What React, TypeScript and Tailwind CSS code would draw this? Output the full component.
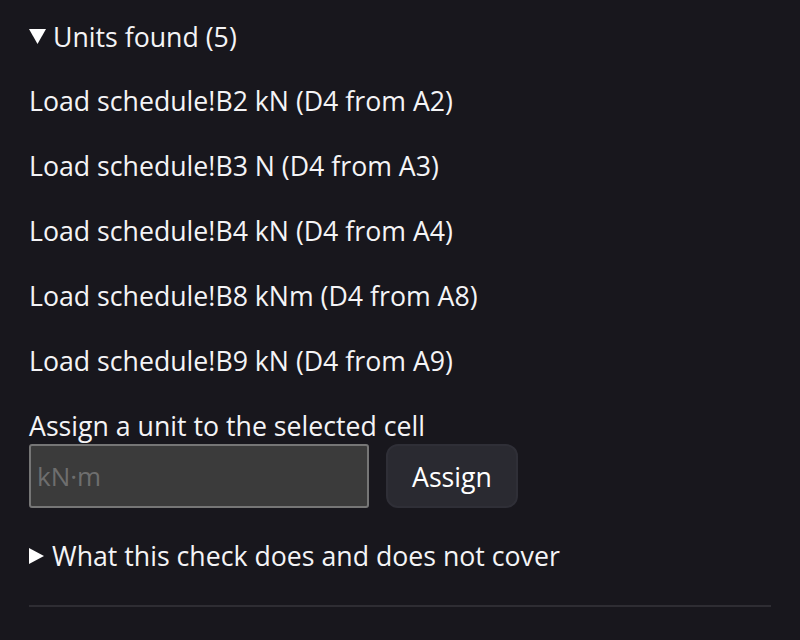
const units = [
  "Load schedule!B2 kN (D4 from A2)",
  "Load schedule!B3 N (D4 from A3)",
  "Load schedule!B4 kN (D4 from A4)",
  "Load schedule!B8 kNm (D4 from A8)",
  "Load schedule!B9 kN (D4 from A9)",
]

const Triangle = ({ open }: { open: boolean }) =>
  open ? (
    <svg width="17" height="17" viewBox="0 0 17 17" className="mr-[7px] shrink-0">
      <path d="M0 1h17L8.5 16z" fill="#ffffff" />
    </svg>
  ) : (
    <svg width="15" height="18" viewBox="0 0 15 18" className="mr-[8px] shrink-0">
      <path d="M0 1v16l15-8z" fill="#ffffff" />
    </svg>
  )

const App = () => {
  return (
    <div className="min-h-[640px] bg-[#18171d] px-[29px] pt-[17px] text-[26.7px] leading-[39px] text-[#f4f4f6] font-['Open_Sans',sans-serif]">
      <div className="flex items-center">
        <Triangle open />
        <span>Units found (5)</span>
      </div>
      <div className="mt-[25px] flex flex-col gap-[26px]">
        {units.map((u) => (
          <p key={u}>{u}</p>
        ))}
      </div>
      <div className="mt-[26px]">Assign a unit to the selected cell</div>
      <div className="-mt-[1px] flex items-center gap-[17px]">
        <input
          placeholder="kN·m"
          className="h-[64px] w-[340px] rounded-[3px] border-2 border-[#767676] bg-[#3b3b3b] px-[6px] text-[26px] text-white placeholder:text-[#6e6e6e] outline-none"
        />
        <button className="h-[64px] rounded-[12px] border-2 border-[#2f2f37] bg-[#2a2a31] px-[24px] text-[26.7px] text-white">
          Assign
        </button>
      </div>
      <div className="mt-[28px] flex items-center">
        <Triangle open={false} />
        <span>What this check does and does not cover</span>
      </div>
      <div className="mt-[30px] h-[2px] bg-[#2e2d33]" />
    </div>
  )
}

export default App
